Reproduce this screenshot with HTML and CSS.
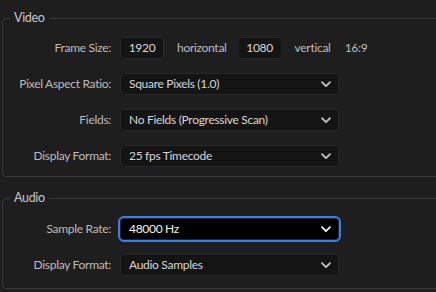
FILE: index.html
```html
<!DOCTYPE html>
<html lang="en">
  <head>
    <title>Sequence Settings</title>
    <meta charset="utf-8" />
    <link rel="stylesheet" href="styles.css">
  </head>

  <body class="panel">
    <fieldset class="group group-video">
      <legend>Video</legend>
      <div class="form">
        <span class="label">Frame Size:</span>
        <div class="frame">
          <span class="num">1920</span>
          <span class="unit">horizontal</span>
          <span class="num">1080</span>
          <span class="unit">vertical</span>
          <span class="ratio">16:9</span>
        </div>

        <span class="label">Pixel Aspect Ratio:</span>
        <div class="select">
          <span>Square Pixels (1.0)</span>
          <svg class="chevron" width="10" height="7" viewBox="0 0 10 7">
            <path d="M1 1.2 L5 5.2 L9 1.2" />
          </svg>
        </div>

        <span class="label">Fields:</span>
        <div class="select">
          <span>No Fields (Progressive Scan)</span>
          <svg class="chevron" width="10" height="7" viewBox="0 0 10 7">
            <path d="M1 1.2 L5 5.2 L9 1.2" />
          </svg>
        </div>

        <span class="label">Display Format:</span>
        <div class="select">
          <span>25 fps Timecode</span>
          <svg class="chevron" width="10" height="7" viewBox="0 0 10 7">
            <path d="M1 1.2 L5 5.2 L9 1.2" />
          </svg>
        </div>
      </div>
    </fieldset>

    <fieldset class="group group-audio">
      <legend>Audio</legend>
      <div class="form">
        <span class="label">Sample Rate:</span>
        <div class="select focused">
          <span>48000 Hz</span>
          <svg class="chevron" width="10" height="7" viewBox="0 0 10 7">
            <path d="M1 1.2 L5 5.2 L9 1.2" />
          </svg>
        </div>

        <span class="label">Display Format:</span>
        <div class="select">
          <span>Audio Samples</span>
          <svg class="chevron" width="10" height="7" viewBox="0 0 10 7">
            <path d="M1 1.2 L5 5.2 L9 1.2" />
          </svg>
        </div>
      </div>
    </fieldset>
  </body>
</html>
```

FILE: styles.css
```css
html,
body {
  margin: 0;
  height: 100%;
  overflow: hidden;
}

.panel {
  background: #1e1e1e;
  color: #bcbcbc;
  font-family: Lato, "Open Sans", sans-serif;
  font-size: 12px;
  letter-spacing: -0.3px;
  line-height: 16px;
}

.group {
  margin: 0 -20px 0 2px;
  padding: 0 0 9px 7px;
  border: 1px solid #383838;
  border-radius: 4px;
}

.group legend {
  padding: 0 4px;
  color: #c6c6c6;
  font-size: 12.5px;
}

.group-video {
  margin-top: 10px;
}

.group-audio {
  margin-top: 13px;
  padding-bottom: 12px;
}

.form {
  display: grid;
  grid-template-columns: 101px 219px;
  column-gap: 9px;
  row-gap: 14px;
  align-items: center;
  padding-top: 11px;
}

.group-audio .form {
  padding-top: 12px;
}

.label {
  text-align: right;
  white-space: nowrap;
}

.frame {
  display: flex;
  align-items: center;
  white-space: nowrap;
}

.num {
  flex: none;
  width: 44px;
  height: 22px;
  line-height: 22px;
  text-align: center;
  background: #141414;
  border-radius: 4px;
  box-shadow: inset 0 0 0 1px #262626;
  color: #d6d6d6;
}

.unit {
  margin: 0 11px 0 13px;
}

.ratio {
  margin-left: 3px;
}

.select {
  display: flex;
  align-items: center;
  justify-content: space-between;
  height: 22px;
  padding: 0 8px 0 9px;
  background: #141414;
  border-radius: 4px;
  box-shadow: inset 0 0 0 1px #262626;
  color: #d6d6d6;
}

.chevron {
  fill: none;
  stroke: #c4c4c4;
  stroke-width: 1.8;
  stroke-linecap: round;
  stroke-linejoin: round;
}

.focused {
  background: #000;
  outline: 2px solid #3a7ee8;
  border-radius: 4px;
  color: #f2f2f2;
}

.focused .chevron {
  stroke: #f0f0f0;
}
```
